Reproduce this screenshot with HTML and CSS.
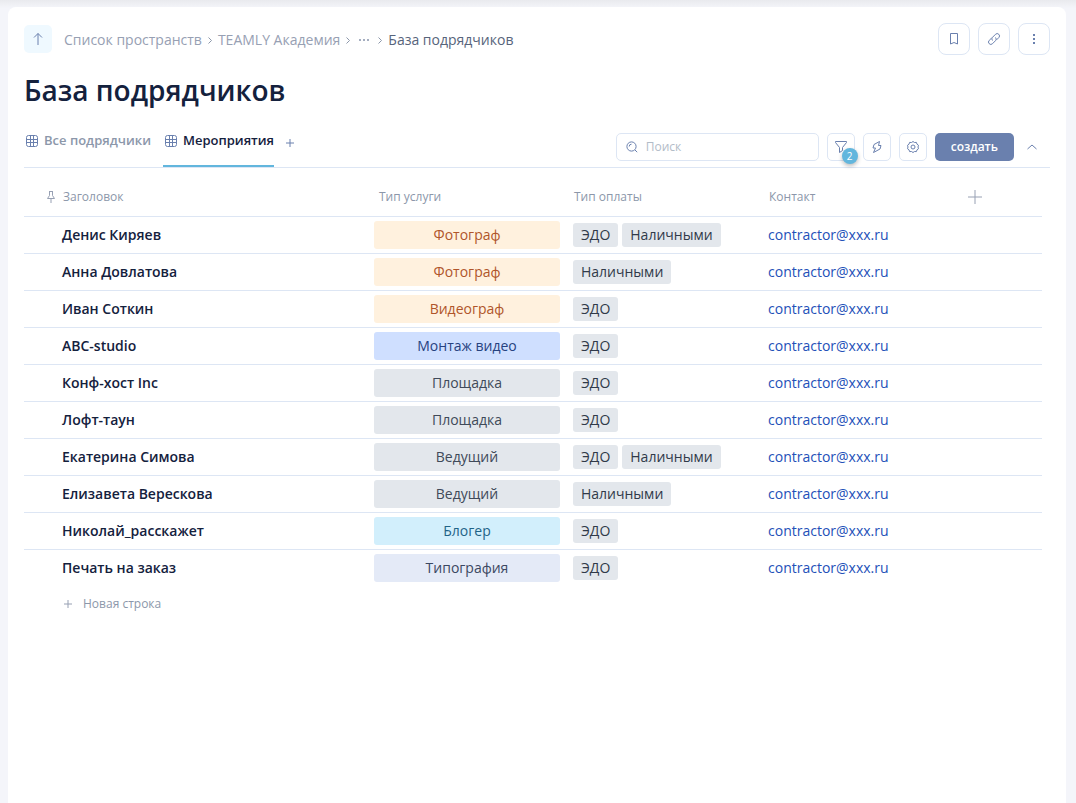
FILE: index.html
```html
<!DOCTYPE html>
<html lang="ru">
<head>
<meta charset="utf-8">
<meta name="viewport" content="width=device-width, initial-scale=1">
<title>База подрядчиков</title>
<link rel="stylesheet" href="styles.css">
</head>
<body>
<svg class="sprite" aria-hidden="true">
  <symbol id="grid" viewBox="0 0 12 12"><rect x=".5" y=".5" width="11" height="11" rx="2"/><path d="M4.5 1v10M7.5 1v10M1 4.5h10M1 7.5h10"/></symbol>
  <symbol id="chevron" viewBox="0 0 6 8"><path d="M1.500 1.500 4.500 4.500 1.500 7.500"/></symbol>
</svg>
<main class="panel">
  <header class="topbar">
    <button class="up" type="button" aria-label="Наверх"><svg width="14" height="14" viewBox="0 0 14 14"><path d="M7 13V1.500M3 5.500l4-4 4 4"/></svg></button>
    <nav class="crumbs" aria-label="Навигация">
      <a class="crumb" href="#">Список пространств</a>
      <svg class="sep" width="6" height="8"><use href="#chevron"/></svg>
      <a class="crumb" href="#">TEAMLY Академия</a>
      <svg class="sep" width="6" height="8"><use href="#chevron"/></svg>
      <button class="more" type="button" aria-label="Ещё"><svg width="12" height="4" viewBox="0 0 12 4"><path d="M1 1h2v2H1zM5 1h2v2H5zM9 1h2v2H9z"/></svg></button>
      <svg class="sep" width="6" height="8"><use href="#chevron"/></svg>
      <a class="crumb current" href="#">База подрядчиков</a>
    </nav>
    <div class="actions">
      <button class="square large" type="button" aria-label="В закладки"><svg width="16" height="16" viewBox="0 0 16 16"><path d="M4.500 2.500h7v10.500L8 11.500l-3.500 1.500z"/></svg></button>
      <button class="square large" type="button" aria-label="Ссылка"><svg width="16" height="16" viewBox="0 0 16 16"><path d="M6.500 9.500a2.300 2.300 0 0 1 0-3.200l3-3a2.300 2.300 0 0 1 3.300 3.300L10.500 8.900M9.500 6.500a2.300 2.300 0 0 1 0 3.200l-3 3a2.300 2.300 0 0 1-3.300-3.300L5.500 7.100"/></svg></button>
      <button class="square large" type="button" aria-label="Меню"><svg class="solid" width="16" height="16" viewBox="0 0 16 16"><path d="M7 3h2v2H7zM7 7h2v2H7zM7 11h2v2H7z"/></svg></button>
    </div>
  </header>

  <h1 class="title">База подрядчиков</h1>

  <div class="toolbar">
    <nav class="tabs" aria-label="Представления">
      <a class="tab" href="#"><svg class="grid" width="12" height="12"><use href="#grid"/></svg>Все подрядчики</a>
      <a class="tab active" href="#" aria-current="page"><svg class="grid" width="12" height="12"><use href="#grid"/></svg>Мероприятия</a>
      <button class="add-tab" type="button" aria-label="Добавить представление"><svg width="8" height="8" viewBox="0 0 8 8"><path d="M4 0v8M0 4h8"/></svg></button>
    </nav>
    <div class="tools">
      <label class="search">
        <svg width="12" height="12" viewBox="0 0 12 12"><circle cx="5.500" cy="5.500" r="4.600"/><path d="M3.200 5.500a2.300 2.300 0 0 1 2.300-2.300M9 9l2.200 2.200"/></svg>
        <input class="search-input" type="search" placeholder="Поиск" aria-label="Поиск">
      </label>
      <button class="square filter" type="button" aria-label="Фильтр: 2"><svg width="14" height="14" viewBox="0 0 14 14"><path d="M1.500 1.500h11v1L8.500 7.500v3l-3 2v-5l-4-5z"/></svg><span class="badge">2</span></button>
      <button class="square" type="button" aria-label="Автоматизация"><svg width="14" height="14" viewBox="0 0 14 14"><path d="M9.500 1.500 4 4.500 3 8h2.500L3.500 12.500 10 9l1-3.500H8.500z"/></svg></button>
      <button class="square" type="button" aria-label="Настройки"><svg width="14" height="14" viewBox="0 0 14 14"><path d="m7 1.500 1.500 1 1.900-.1.600 1.800L12.500 5.300 12 7l.5 1.700-1.500 1.100-.6 1.800-1.900-.1-1.500 1-1.500-1-1.900.1L3 9.800 1.500 8.700 2 7l-.5-1.700L3 4.200l.6-1.800 1.900.1z"/><circle cx="7" cy="7" r="2"/></svg></button>
      <button class="create" type="button">создать</button>
      <button class="collapse" type="button" aria-label="Свернуть"><svg width="12" height="8" viewBox="0 0 12 8"><path d="M1.500 6 6 2l4.500 4"/></svg></button>
    </div>
  </div>

  <div class="table-area">
    <table class="table">
      <colgroup><col class="col-title"><col class="col-data"><col class="col-data"><col class="col-data"><col></colgroup>
      <thead>
        <tr>
          <th class="head-title"><span class="pinned"><svg width="8" height="12" viewBox="0 0 8 12"><path d="M2 .5h4M2.500.5v4L.5 7.500h7l-2-3v-4M4 7.500V12"/></svg>Заголовок</span></th>
          <th>Тип услуги</th>
          <th>Тип оплаты</th>
          <th>Контакт</th>
          <th><button class="add-column" type="button" aria-label="Добавить столбец"><svg width="14" height="14" viewBox="0 0 14 14"><path d="M7 0v14M0 7h14"/></svg></button></th>
        </tr>
      </thead>
      <tbody>
        <tr><td class="name">Денис Киряев</td><td class="service"><span class="pill orange">Фотограф</span></td><td><div class="tags"><span class="tag">ЭДО</span><span class="tag">Наличными</span></div></td><td><a class="mail" href="mailto:contractor@xxx.ru">contractor@xxx.ru</a></td><td></td></tr>
        <tr><td class="name">Анна Довлатова</td><td class="service"><span class="pill orange">Фотограф</span></td><td><div class="tags"><span class="tag">Наличными</span></div></td><td><a class="mail" href="mailto:contractor@xxx.ru">contractor@xxx.ru</a></td><td></td></tr>
        <tr><td class="name">Иван Соткин</td><td class="service"><span class="pill orange">Видеограф</span></td><td><div class="tags"><span class="tag">ЭДО</span></div></td><td><a class="mail" href="mailto:contractor@xxx.ru">contractor@xxx.ru</a></td><td></td></tr>
        <tr><td class="name">ABC-studio</td><td class="service"><span class="pill blue">Монтаж видео</span></td><td><div class="tags"><span class="tag">ЭДО</span></div></td><td><a class="mail" href="mailto:contractor@xxx.ru">contractor@xxx.ru</a></td><td></td></tr>
        <tr><td class="name">Конф-хост Inc</td><td class="service"><span class="pill gray">Площадка</span></td><td><div class="tags"><span class="tag">ЭДО</span></div></td><td><a class="mail" href="mailto:contractor@xxx.ru">contractor@xxx.ru</a></td><td></td></tr>
        <tr><td class="name">Лофт-таун</td><td class="service"><span class="pill gray">Площадка</span></td><td><div class="tags"><span class="tag">ЭДО</span></div></td><td><a class="mail" href="mailto:contractor@xxx.ru">contractor@xxx.ru</a></td><td></td></tr>
        <tr><td class="name">Екатерина Симова</td><td class="service"><span class="pill gray">Ведущий</span></td><td><div class="tags"><span class="tag">ЭДО</span><span class="tag">Наличными</span></div></td><td><a class="mail" href="mailto:contractor@xxx.ru">contractor@xxx.ru</a></td><td></td></tr>
        <tr><td class="name">Елизавета Верескова</td><td class="service"><span class="pill gray">Ведущий</span></td><td><div class="tags"><span class="tag">Наличными</span></div></td><td><a class="mail" href="mailto:contractor@xxx.ru">contractor@xxx.ru</a></td><td></td></tr>
        <tr><td class="name">Николай_расскажет</td><td class="service"><span class="pill cyan">Блогер</span></td><td><div class="tags"><span class="tag">ЭДО</span></div></td><td><a class="mail" href="mailto:contractor@xxx.ru">contractor@xxx.ru</a></td><td></td></tr>
        <tr><td class="name">Печать на заказ</td><td class="service"><span class="pill lavender">Типография</span></td><td><div class="tags"><span class="tag">ЭДО</span></div></td><td><a class="mail" href="mailto:contractor@xxx.ru">contractor@xxx.ru</a></td><td></td></tr>
      </tbody>
    </table>
    <button class="new-row" type="button"><svg width="8" height="8" viewBox="0 0 8 8"><path d="M4 0v8M0 4h8"/></svg>Новая строка</button>
  </div>
</main>
</body>
</html>
```

FILE: styles.css
```css
* {
  box-sizing: border-box;
}

body {
  margin: 0;
  min-height: 100vh;
  display: flex;
  padding: 7px 10px 0 8px;
  background: linear-gradient(#e9eaee, #f4f5fa 8px);
  color: #14213d;
  font: 14px/20px "Open Sans", "Noto Sans", sans-serif;
}

button {
  margin: 0;
  padding: 0;
  border: 0;
  background: none;
  color: inherit;
  font: inherit;
  cursor: pointer;
}

a {
  color: inherit;
  text-decoration: none;
}

svg {
  display: block;
  flex: none;
  fill: none;
  stroke: #6a80ae;
}

.sprite {
  position: absolute;
  width: 0;
  height: 0;
}

.panel {
  flex: 1;
  min-width: 0;
  padding: 16px;
  border-radius: 8px 8px 0 0;
  background: #fff;
}

.topbar {
  display: flex;
  align-items: center;
}

.up {
  display: grid;
  place-items: center;
  width: 28px;
  height: 28px;
  border-radius: 5px;
  background: #eff9ff;
}

.crumbs {
  display: flex;
  align-items: center;
  gap: 5px;
  margin-left: 12px;
  padding-top: 2px;
  color: #97a0b3;
}

.sep {
  stroke: #8c97aa;
}

.more {
  padding: 0 2px;
}

.more svg {
  fill: #a5aec0;
  stroke: none;
}

.current {
  color: #57647b;
}

.actions {
  display: flex;
  gap: 8px;
  margin-left: auto;
}

.square {
  display: grid;
  place-items: center;
  width: 28px;
  height: 28px;
  border: 1px solid #dde6f4;
  border-radius: 5px;
  background: #fff;
}

.square.large {
  width: 32px;
  height: 32px;
  border-radius: 8px;
}

.square .solid {
  fill: #6a80ae;
  stroke: none;
}

.title {
  margin: 15px 0 0;
  font-size: 28px;
  font-weight: 600;
  line-height: 40px;
}

.toolbar {
  display: flex;
  justify-content: space-between;
  align-items: flex-start;
  margin-top: 17px;
  border-bottom: 1px solid #dde6f4;
}

.tabs {
  display: flex;
  gap: 12px;
  padding-left: 2px;
}

.tab {
  display: flex;
  align-items: flex-start;
  gap: 6px;
  height: 40px;
  padding: 3px 0 0;
  color: #8c97aa;
  font-size: 13px;
  font-weight: 600;
  line-height: 20px;
}

.tab .grid {
  margin-top: 5px;
}

.tab.active {
  padding-left: 2px;
  border-bottom: 2px solid #62b6dd;
  color: #14213d;
}

.add-tab {
  align-self: flex-start;
  margin-top: 12px;
}

.tools {
  display: flex;
  gap: 8px;
  padding-top: 6px;
}

.search {
  display: flex;
  align-items: center;
  gap: 8px;
  width: 203px;
  height: 28px;
  padding: 0 9px;
  border: 1px solid #dde6f4;
  border-radius: 5px;
}

.search-input {
  flex: 1;
  min-width: 0;
  padding: 0;
  border: 0;
  outline: 0;
  background: none;
  font: inherit;
  font-size: 12px;
}

.search-input::placeholder {
  color: #b2bcc8;
}

.filter {
  position: relative;
}

.badge {
  position: absolute;
  right: -4px;
  bottom: -4px;
  width: 16px;
  height: 16px;
  border-radius: 8px;
  background: #62b6dd;
  box-shadow: 0 2px 4px #0004;
  color: #fff;
  font-size: 10px;
  line-height: 16px;
}

.create {
  height: 28px;
  padding: 0 16px;
  border-radius: 5px;
  background: #6a80ae;
  color: #fff;
  font-size: 12px;
  font-weight: 600;
}

.collapse {
  padding: 0 12px 0 4px;
}

.table-area {
  padding-right: 8px;
}

.table {
  width: 100%;
  table-layout: fixed;
  border-collapse: separate;
  border-spacing: 0;
}

.col-title {
  width: 345px;
}

.col-data {
  width: 195px;
}

.table th {
  height: 49px;
  padding: 10px 10px 0;
  border-bottom: 1px solid #dde6f4;
  color: #8c97aa;
  font-size: 12px;
  font-weight: 400;
  text-align: left;
}

.table td {
  height: 37px;
  padding: 0 9px;
  border-bottom: 1px solid #dde6f4;
}

.table tbody tr:last-child td {
  height: 36px;
  border-bottom: 0;
}

.table .head-title {
  padding-left: 23px;
}

.pinned {
  display: flex;
  align-items: center;
  gap: 8px;
}

.pinned svg,
.add-column svg,
.new-row svg {
  stroke: #97a0b3;
}

.add-column {
  display: block;
  margin-left: 4px;
}

.table .name {
  padding-left: 38px;
  font-weight: 600;
}

.table .service {
  padding: 0 4px 0 5px;
}

.pill {
  display: block;
  border-radius: 3px;
  line-height: 28px;
  text-align: center;
}

.orange {
  background: #fff1de;
  color: #b0552a;
}

.blue {
  background: #cfdfff;
  color: #27427f;
}

.gray {
  background: #e3e7ec;
  color: #404a59;
}

.cyan {
  background: #d2effc;
  color: #1f6387;
}

.lavender {
  background: #e4eaf7;
  color: #3b4862;
}

.tags {
  display: flex;
  gap: 4px;
}

.tag {
  padding: 0 8px;
  border-radius: 3px;
  background: #e3e7ec;
  color: #303a49;
  line-height: 24px;
}

.mail {
  color: #2350b8;
}

.new-row {
  display: flex;
  align-items: center;
  gap: 11px;
  margin: 8px 0 0 40px;
  color: #8c97aa;
  font-size: 12px;
}
```
